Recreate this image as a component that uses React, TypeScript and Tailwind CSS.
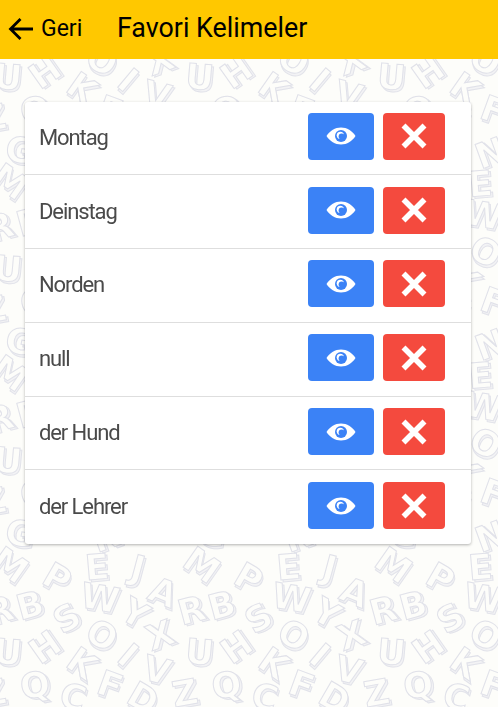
const TILE = 191.67;

// letter positions inside one background tile: [char, x, y, rotation]
const letters: [string, number, number, number][] = [
  ["M", 10, 182, 35],
  ["P", 57, 195, 30],
  ["E", 97, 184, -5],
  ["J", 138, 185, 15],
  ["A", 163, 209, 22],
  ["R", 0, 227, -15],
  ["B", 30, 222, -15],
  ["S", 67, 235, -30],
  ["W", 100, 215, 10],
  ["Y", 135, 230, 30],
  ["X", 160, 252, -20],
  ["U", 8, 269, 5],
  ["H", 45, 264, -35],
  ["O", 102, 252, 30],
  ["I", 128, 272, 40],
  ["V", 157, 287, 15],
  ["K", 82, 280, 35],
  ["Q", 35, 302, -10],
  ["C", 73, 314, 15],
  ["F", 110, 302, 20],
  ["D", 143, 315, 30],
  ["Z", 185, 310, -10],
  ["G", 20, 342, 10],
  ["N", 107, 345, -20],
];

const words = ["Montag", "Deinstag", "Norden", "null", "der Hund", "der Lehrer"];

function LetterTile() {
  return (
    <g id="tile" fontFamily="'DejaVu Sans', sans-serif" fontWeight="700" fontSize="35" textAnchor="middle">
      {letters.map(([ch, x, y, r]) => (
        <g key={ch} transform={`translate(${x} ${y}) rotate(${r})`}>
          <text x="2" y="14" fill="#f3f3f5" stroke="#e2e3ea" strokeWidth="1">
            {ch}
          </text>
          <text x="0" y="12" fill="#fdfdfa" stroke="#e0e1e9" strokeWidth="1">
            {ch}
          </text>
        </g>
      ))}
    </g>
  );
}

function LetterBackground() {
  const rows = [-1, 0, 1, 2];
  const cols = [0, 1, 2, 3];
  return (
    <svg className="absolute inset-0 h-full w-full blur-[0.4px]" aria-hidden>
      <defs>
        <LetterTile />
      </defs>
      {rows.map((r) =>
        cols.map((c) => <use key={`${r}-${c}`} href="#tile" x={(c - 1) * TILE} y={r * TILE} />),
      )}
    </svg>
  );
}

function EyeIcon() {
  return (
    <svg width="30" height="18" viewBox="0 0 30 18">
      <path d="M0.5 9C4 3.6 9 0.5 15 0.5S26 3.6 29.5 9C26 14.4 21 17.5 15 17.5S4 14.4 0.5 9Z" fill="#fff" />
      <circle cx="15" cy="9" r="6" fill="#3b82f6" />
      <circle cx="14.3" cy="8.3" r="3.6" fill="#fff" />
      <circle cx="15.6" cy="9.6" r="3" fill="#3b82f6" />
    </svg>
  );
}

function CloseIcon() {
  return (
    <svg width="26" height="26" viewBox="0 0 26 26">
      <path d="M2.5 2.5L23.5 23.5M23.5 2.5L2.5 23.5" stroke="#fff" strokeWidth="5.6" fill="none" />
    </svg>
  );
}

function BackArrow() {
  return (
    <svg width="26" height="24" viewBox="0 0 26 24" fill="none" stroke="#000" strokeWidth="2.8">
      <path d="M25 12H3M12.5 2L2.5 12L12.5 22" />
    </svg>
  );
}

function WordRow({ word }: { word: string }) {
  return (
    <div className="flex h-[73.8px] items-center border-b border-[#dedede] pb-[3px] pl-[14px] pr-[26px] last:border-b-0">
      <span className="mt-[2px] flex-1 text-[22px] tracking-[-1.1px] text-[#4a4a4a]">{word}</span>
      <button className="mr-[9px] flex h-[47px] w-[66px] items-center justify-center rounded-[4px] bg-[#3b82f6]">
        <EyeIcon />
      </button>
      <button className="flex h-[47px] w-[62px] items-center justify-center rounded-[4px] bg-[#f44a3e]">
        <CloseIcon />
      </button>
    </div>
  );
}

export default function App() {
  return (
    <div className="relative h-[707px] w-[498px] overflow-hidden bg-[#fdfdfa] font-['Roboto',sans-serif]">
      <LetterBackground />

      <div className="relative flex h-[59px] items-center bg-[#ffc800] pb-[2px] text-black">
        <div className="ml-[8px] flex w-[109px] items-center gap-[7px]">
          <BackArrow />
          <span className="mt-[2px] text-[23px]">Geri</span>
        </div>
        <h1 className="text-[26.8px] font-normal">Favori Kelimeler</h1>
      </div>

      <div className="relative ml-[25px] mt-[42.5px] w-[446px] rounded-[3px] bg-white shadow-[0_1px_3px_rgba(0,0,0,0.3)]">
        {words.map((w) => (
          <WordRow key={w} word={w} />
        ))}
      </div>
    </div>
  );
}
